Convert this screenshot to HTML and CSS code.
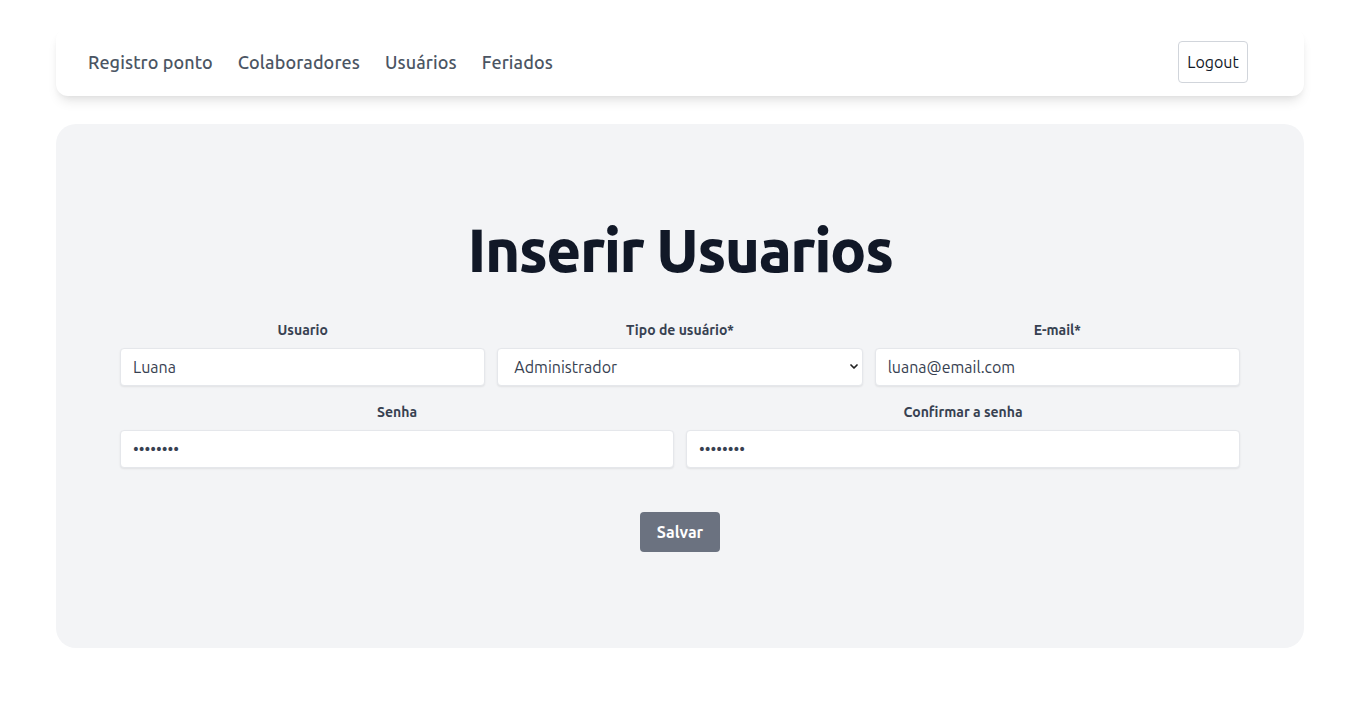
FILE: index.html
```html
<!DOCTYPE html>
<html lang="pt-BR">
<head>
<meta charset="utf-8">
<title>Inserir Usuarios</title>
<link rel="stylesheet" href="styles.css">
</head>
<body>
<div class="page">
  <nav class="navbar">
    <ul class="nav-links">
      <li><a href="#">Registro ponto</a></li>
      <li><a href="#">Colaboradores</a></li>
      <li><a href="#">Usuários</a></li>
      <li><a href="#">Feriados</a></li>
    </ul>
    <button class="logout" type="button">Logout</button>
  </nav>

  <main class="card">
    <h1 class="title">Inserir Usuarios</h1>
    <form class="form">
      <div class="row row-3">
        <div class="field">
          <label for="usuario">Usuario</label>
          <input id="usuario" type="text" value="Luana">
        </div>
        <div class="field">
          <label for="tipo">Tipo de usuário*</label>
          <div class="select-wrap">
            <select id="tipo">
              <option>Administrador</option>
            </select>
            <svg class="chev" viewBox="0 0 8 5" width="8" height="5"><path d="M1 1l3 3 3-3" fill="none" stroke="#222" stroke-width="1.7" stroke-linecap="round" stroke-linejoin="round"/></svg>
          </div>
        </div>
        <div class="field">
          <label for="email">E-mail*</label>
          <input id="email" type="text" value="luana@email.com">
        </div>
      </div>
      <div class="row row-2">
        <div class="field">
          <label for="senha">Senha</label>
          <input id="senha" type="password" value="12345678">
        </div>
        <div class="field">
          <label for="conf">Confirmar a senha</label>
          <input id="conf" type="password" value="12345678">
        </div>
      </div>
      <div class="actions">
        <button class="save" type="button">Salvar</button>
      </div>
    </form>
  </main>
</div>
</body>
</html>
```

FILE: styles.css
```css
* { box-sizing: border-box; }
html, body { margin: 0; padding: 0; background: #ffffff; }
body {
  font-family: "Ubuntu", "Noto Sans", "Open Sans", sans-serif;
  color: #374151;
}
.page {
  padding: 28px 56px 0;
}
.navbar {
  height: 68px;
  background: #fff;
  border-radius: 12px;
  box-shadow: 0 8px 12px -3px rgba(0,0,0,0.10), 0 3px 6px -2px rgba(0,0,0,0.06);
  display: flex;
  align-items: center;
  justify-content: space-between;
  padding: 0 56px 0 32px;
}
.nav-links {
  list-style: none;
  margin: 0;
  padding: 0;
  display: flex;
  gap: 25px;
}
.nav-links a {
  text-decoration: none;
  color: #4b5563;
  font-size: 18px;
  font-weight: 500;
  letter-spacing: 0.1px;
}
.logout {
  font-family: inherit;
  font-size: 16px;
  color: #111827;
  background: #fff;
  border: 1px solid #d1d5db;
  border-radius: 4px;
  width: 70px;
  height: 42px;
  padding: 0;
}
.card {
  margin-top: 28px;
  background: #f3f4f6;
  border-radius: 20px;
  padding: 96px 64px 96px;
}
.title {
  margin: 0;
  text-align: center;
  font-size: 60px;
  line-height: 60px;
  font-weight: 760;
  letter-spacing: -1.5px;
  color: #111827;
}
.form { margin-top: 40px; }
.row {
  display: grid;
  gap: 12px;
}
.row-3 { grid-template-columns: 1fr 1fr 1fr; }
.row-2 { grid-template-columns: 1fr 1fr; margin-top: 16px; }
.field {
  display: flex;
  flex-direction: column;
  gap: 8px;
}
.field label {
  text-align: center;
  font-size: 14px;
  line-height: 20px;
  font-weight: 700;
  color: #374151;
}
.field input, .field select {
  width: 100%;
  height: 38px;
  background: #fff;
  border: 1px solid #e5e7eb;
  border-radius: 4px;
  box-shadow: 0 1px 2px rgba(0,0,0,0.08);
  padding: 0 12px;
  font-family: inherit;
  font-size: 16px;
  color: #374151;
  outline: none;
}
.select-wrap { position: relative; }
.field select {
  appearance: none;
  -webkit-appearance: none;
  padding-left: 16px;
}
.chev {
  position: absolute;
  right: 5px;
  top: 16px;
  pointer-events: none;
}
.actions {
  display: flex;
  justify-content: center;
  margin-top: 44px;
}
.save {
  width: 80px;
  height: 40px;
  background: #6b7280;
  color: #fff;
  border: none;
  border-radius: 4px;
  font-family: inherit;
  font-size: 16px;
  font-weight: 700;
}
```
